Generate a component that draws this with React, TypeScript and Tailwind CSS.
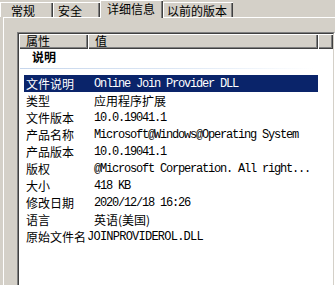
import React from 'react';

type Row = { label: string; value: string; kind: 'mono' | 'cjk' | 'wide'; selected?: boolean };

const rows: Row[] = [
  { label: '文件说明', value: 'Online Join Provider DLL', kind: 'mono', selected: true },
  { label: '类型', value: '应用程序扩展', kind: 'cjk' },
  { label: '文件版本', value: '10.0.19041.1', kind: 'mono' },
  { label: '产品名称', value: 'Microsoft@Windows@Operating System', kind: 'mono' },
  { label: '产品版本', value: '10.0.19041.1', kind: 'mono' },
  { label: '版权', value: '@Microsoft Corperation. All right...', kind: 'mono' },
  { label: '大小', value: '418 KB', kind: 'mono' },
  { label: '修改日期', value: '2020/12/18 16:26', kind: 'mono' },
  { label: '语言', value: '英语(美国)', kind: 'cjk' },
  { label: '原始文件名', value: 'JOINPROVIDEROL.DLL', kind: 'wide' },
];

const tabEdge = 'shadow-[inset_1px_1px_0_#ffffff,inset_-1px_0_0_#404040,inset_-2px_0_0_#808080]';

function Tab({ label, width, pad, selected }: { label: string; width: string; pad: string; selected?: boolean }) {
  if (selected) {
    return (
      <div className={`relative z-10 -mb-px h-[18px] bg-[#d4d0c8] pt-[3px] ${width} ${pad} ${tabEdge}`}>
        {label}
      </div>
    );
  }
  return (
    <div className={`h-[15px] bg-[#d4d0c8] pt-[3px] ${width} ${pad} ${tabEdge}`}>
      {label}
    </div>
  );
}

const headCell =
  'h-full bg-[#d4d0c8] pt-[1px] shadow-[inset_1px_1px_0_#ffffff,inset_-1px_-1px_0_#404040,inset_-2px_-2px_0_#808080]';

export default function App() {
  return (
    <div className="flex h-[285px] w-[335px] flex-col overflow-hidden bg-[#d4d0c8] font-['Noto_Sans_CJK_SC',sans-serif] text-[12px] leading-[12px] text-black">
      {/* tabs */}
      <div className="flex h-[17px] shrink-0 items-end">
        <Tab label="常规" width="w-[53px]" pad="pl-[11px]" />
        <Tab label="安全" width="w-[47px]" pad="pl-[5px]" />
        <Tab label="详细信息" width="w-[63px]" pad="pl-[7px]" selected />
        <Tab label="以前的版本" width="w-[70px]" pad="pl-[4px]" />
      </div>

      {/* panel */}
      <div className="ml-[3px] flex flex-1 flex-col border-l border-t border-white pl-[13px] pt-[14px]">
        <div className="flex w-[318px] flex-1 border-r border-l border-t border-r-white border-l-[#808080] border-t-[#808080]">
          <div className="flex flex-1 flex-col border-l border-r border-t border-r-[#d4d0c8] border-l-[#404040] border-t-[#404040] bg-white">
            {/* header */}
            <div className="flex h-[15px] shrink-0">
              <div className={`w-[69px] pl-[7px] ${headCell}`}>属性</div>
              <div className={`w-[230px] pl-[7px] ${headCell}`}>值</div>
              <div className={`flex-1 ${headCell}`} />
            </div>

            {/* group */}
            <div className="flex h-[16px] items-center pl-[13px] font-bold">说明</div>
            <div className="mt-[3px] mb-[6px] ml-px h-px w-[294px] bg-gradient-to-r from-[#c6d6ec] via-[#dbe6f4] to-white" />

            {rows.map((r) => (
              <div
                key={r.label}
                className={`ml-[5px] flex h-[17px] w-[294px] items-center ${r.selected ? 'bg-[#0a246a] text-white' : ''}`}
              >
                <div className="w-[64px] shrink-0 pl-[2px]">{r.label}</div>
                {r.kind === 'cjk' && <div className="pl-[6px]">{r.value}</div>}
                {r.kind === 'mono' && (
                  <div className="whitespace-pre pl-[6px] font-['Liberation_Mono',monospace] text-[12px] tracking-[-1.2px]">
                    {r.value}
                  </div>
                )}
                {r.kind === 'wide' && (
                  <div className="-ml-[1px] whitespace-pre font-['Liberation_Mono',monospace] text-[12px] tracking-[-0.76px]">
                    {r.value}
                  </div>
                )}
              </div>
            ))}
          </div>
        </div>
      </div>
    </div>
  );
}
